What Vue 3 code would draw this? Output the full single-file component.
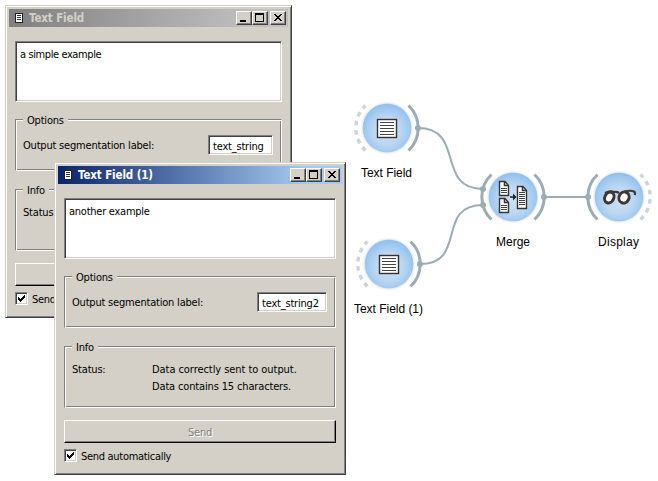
<script setup>
const windows = [
  { id: 'first', title: 'Text Field', text: 'a simple example', label: 'text_string', active: false },
  { id: 'second', title: 'Text Field (1)', text: 'another example', label: 'text_string2', active: true },
]
const nodes = [
  { x: 387, y: 128, label: 'Text Field', lx: 361, w: 51, ly: 177, left: 'open', right: 'linked', icon: 'text' },
  { x: 389, y: 264, label: 'Text Field (1)', lx: 354, w: 69, ly: 313, left: 'open', right: 'linked', icon: 'text' },
  { x: 513, y: 197, label: 'Merge', lx: 496, w: 34, ly: 246, left: 'linked', right: 'linked', icon: 'merge' },
  { x: 619, y: 197, label: 'Display', lx: 598, w: 41, ly: 246, left: 'linked', right: 'open', icon: 'glasses' },
]
const links = [
  'M418 128C466 128 435 189 483 189',
  'M420 264C468 264 435 205 483 205',
  'M544 197H588',
]
const dots = [[418, 128], [420, 264], [483, 189], [483, 205], [544, 197], [588, 197]]
</script>

<template>
  <main class="desktop">
    <svg class="canvas" width="658" height="481" viewBox="0 0 658 481">
      <defs>
        <radialGradient id="disc" cx=".5" cy=".56" r=".56">
          <stop offset="0" stop-color="#cfe0f3" />
          <stop offset=".5" stop-color="#bdd7f2" />
          <stop offset="1" stop-color="#8fc0ef" />
        </radialGradient>
        <filter id="glow" x="-20%" y="-20%" width="140%" height="140%"><feGaussianBlur stdDeviation="1" /></filter>
      </defs>
      <path v-for="d in links" :key="d" :d="d" class="link" />
      <g v-for="n in nodes" :key="n.label">
        <g :transform="`translate(${n.x} ${n.y})`">
          <path d="M-21.5 -22.5A31 31 0 0 0 -21.5 22.5" :class="['arc', n.left]" />
          <path d="M21.5 -22.5A31 31 0 0 1 21.5 22.5" :class="['arc', n.right]" />
          <circle r="25" class="halo" filter="url(#glow)" />
          <circle r="24.3" fill="url(#disc)" />
          <g v-if="n.icon === 'text'">
            <rect x="-9.5" y="-8.5" width="19" height="18" class="sheet" />
            <path d="M-7 -5.5H7M-7 -2.5H7M-7 .5H7M-7 3.5H7M-7 6.5H7" class="rows" />
          </g>
          <g v-else-if="n.icon === 'merge'">
            <path d="M-13.5 -15.500H-8L-4.500 -11.500V-1.500H-13.500ZM-13.500 1.500H-8L-4.500 5.500V15.500H-13.500ZM4.500 -10.500H10L13.500 -6.500V11.500H4.500Z" class="sheet" />
            <path d="M-8.500 -15V-11.500H-5M-8.500 2V5.500H-5M9.500 -10V-6.500H13" class="fold" />
            <path d="M-12 -8.500H-6M-12 -6.500H-6M-12 -4.500H-6M-12 8.500H-6M-12 10.500H-6M-12 12.500H-6M6 -4.500H12M6 -2.500H12M6 -.5H12M6 1.500H12M6 3.500H12M6 5.500H12M6 7.500H12" class="rows" />
            <path d="M-3 -.75H0V-3.500L3.500 0L0 3.500V.75H-3Z" fill="#222" />
          </g>
          <g v-else class="glasses">
            <ellipse cx="-9.700" cy=".5" rx="4.500" ry="5.700" transform="rotate(25 -9.700 .5)" />
            <ellipse cx="5" cy=".5" rx="5" ry="5.700" transform="rotate(25 5 .5)" />
            <path d="M-14 -4Q-9 -6.500 -5 -5Q-2 -5.500 0 -4M5 -5.500Q12 -7 15 -5.500Q16.500 -4.500 15.800 -2" />
          </g>
        </g>
        <text :x="n.lx" :y="n.ly" :textLength="n.w" class="caption">{{ n.label }}</text>
      </g>
      <circle v-for="(d, i) in dots" :key="i" :cx="d[0]" :cy="d[1]" r="3" fill="#9cacb5" />
    </svg>

    <section v-for="w in windows" :key="w.id" :class="['window', w.id]">
      <header :class="['titlebar', { active: w.active }]">
        <svg class="app-icon" width="10" height="10" viewBox="0 0 10 10" shape-rendering="crispEdges">
          <rect x="1.500" y=".5" width="7" height="9" fill="#fff" stroke="#222" />
          <path d="M3 2.500H7M3 4.500H7M3 6.500H7" stroke="#333" />
        </svg>
        <span class="title">{{ w.title }}</span>
        <div class="controls">
          <i class="ctl"><svg width="12" height="10" shape-rendering="crispEdges"><path d="M2 8H8" stroke="#000" stroke-width="2" /></svg></i>
          <i class="ctl"><svg width="12" height="10" shape-rendering="crispEdges"><path d="M1 0H10V9H1ZM2 2V8H9V2Z" fill-rule="evenodd" /></svg></i>
          <i class="ctl close"><svg width="12" height="10" shape-rendering="crispEdges"><path d="M2 1h2v1h1v1h2V2h1V1h2v1H9v1H8v1H7v1h1v1h1v1h1v1H8V7H7V6H5v1H4v1H2V7h1V6h1V5h1V4H4V3H3V2H2z" /></svg></i>
        </div>
      </header>
      <div class="content">
        <div class="textarea">{{ w.text }}</div>
        <section class="group options">
          <span class="legend">Options</span>
          <span class="field-label">Output segmentation label:</span>
          <span class="edit">{{ w.label }}</span>
        </section>
        <section class="group info">
          <span class="legend short">Info</span>
          <span class="status">Status:</span>
          <div v-if="w.active" class="message"><div>Data correctly sent to output.</div><div class="count">Data contains 15 characters.</div></div>
        </section>
        <div class="send">{{ w.active ? 'Send' : '' }}</div>
        <div class="auto">
          <span class="check"><svg width="9" height="9" shape-rendering="crispEdges"><path d="M1 3h1v1h1v1h1V4h1V3h1V2h1V1h1v3H7v1H6v1H5v1H4v1H3V7H2V6H1z" /></svg></span>
          <span class="auto-label">{{ w.active ? 'Send automatically' : 'Send' }}</span>
        </div>
      </div>
    </section>
  </main>
</template>

<style>
body { margin: 0; background: #fff; }
</style>

<style scoped>
* { box-sizing: border-box; }
.desktop { position: relative; width: 658px; height: 481px; overflow: hidden; background: #fff; }
.canvas { display: block; }
.link { fill: none; stroke: #9cacb5; stroke-width: 2; }
.arc { fill: none; stroke: #9cacb5; stroke-width: 3; }
.arc.open { stroke: #cdd5d9; stroke-width: 3.4; stroke-dasharray: 4.6 4.6; stroke-dashoffset: .5; }
.halo { fill: #d4dde6; }
.sheet { fill: #fff; stroke: #333; stroke-width: 1.4; }
.rows { fill: none; stroke: #444; stroke-width: 1; }
.fold { fill: none; stroke: #333; stroke-width: 1.5; }
.glasses { fill: #fff; stroke: #3c3935; stroke-width: 3; }
.glasses path { fill: none; stroke-width: 2.2; }
.caption { font: 12px "Liberation Sans", Arial, sans-serif; fill: #000; }
.window { position: absolute; height: 313px; padding: 3px; background: #d4d0c8; border: 1px solid; border-color: #d4d0c8 #404040 #404040 #d4d0c8; box-shadow: inset 1px 1px #fff, inset -1px -1px #808080; font: 11px/13px "DejaVu Sans Condensed", "DejaVu Sans", sans-serif; font-stretch: condensed; letter-spacing: -.2px; color: #000; white-space: nowrap; }
.first { left: 5px; top: 5px; width: 287px; }
.second { left: 54px; top: 162px; width: 292px; }
.titlebar { display: flex; align-items: center; height: 18px; padding: 0 2px 0 5px; background: linear-gradient(90deg, #808080, #c0c0c0 88%); color: #d4d0c8; font-weight: bold; }
.titlebar.active { background: linear-gradient(90deg, #0a246a, #a6caf0 88%); color: #fff; }
.title { margin-left: 5px; font-size: 11.5px; letter-spacing: -.12px; }
.controls { display: flex; margin-left: auto; }
.ctl { width: 16px; height: 14px; padding: 1px; border: 1px solid; border-color: #fff #404040 #404040 #fff; box-shadow: inset -1px -1px #808080; background: #d4d0c8; }
.ctl svg { display: block; }
.close { margin-left: 2px; }
.content { padding: 14px 6px 0; }
.textarea { height: 61px; padding: 6px 4px; letter-spacing: -.25px; background: #fff; border: 1px solid; border-color: #808080 #fff #fff #808080; box-shadow: inset 1px 1px #404040, inset -1px -1px #d4d0c8; }
.first .textarea { letter-spacing: -.4px; }
.group { display: grid; grid-template-rows: 0 auto; margin-top: 17px; border: 1px solid; border-color: #808080 #fff #fff #808080; box-shadow: inset 1px 1px #fff, inset -1px -1px #808080; }
.options { height: 52px; grid-template-columns: 1fr auto; }
.legend { grid-column: 1 / -1; justify-self: start; height: 13px; margin: -6px 0 0 7px; padding: 0 4px; background: #d4d0c8; }
.field-label { margin: 19px 0 0 7px; }
.edit { height: 20px; margin: 15px 8px 0 0; padding: 4px 5px 0 4px; background: #fff; border: 1px solid; border-color: #808080 #fff #fff #808080; box-shadow: inset 1px 1px #404040, inset -1px -1px #d4d0c8; width: 65px; }
.second .edit { width: 70px; }
.info { height: 62px; margin-top: 18px; grid-template-columns: 87px 1fr; }
.status { margin: 16px 0 0 7px; }
.message { margin-top: 14px; line-height: 17px; letter-spacing: -.06px; }
.count { letter-spacing: -.15px; }
.send { height: 23px; margin-top: 12px; padding-top: 5px; text-align: center; color: #808080; text-shadow: 1px 1px #fff; border: 1px solid; border-color: #fff #000 #000 #fff; box-shadow: inset -1px -1px #808080; }
.auto { display: flex; margin-top: 6px; }
.check { width: 13px; height: 13px; padding: 1px; background: #fff; border: 1px solid; border-color: #808080 #fff #fff #808080; box-shadow: inset 1px 1px #404040, inset -1px -1px #d4d0c8; }
.check svg { display: block; }
.auto-label { margin: 1px 0 0 4px; letter-spacing: -.3px; }
</style>
